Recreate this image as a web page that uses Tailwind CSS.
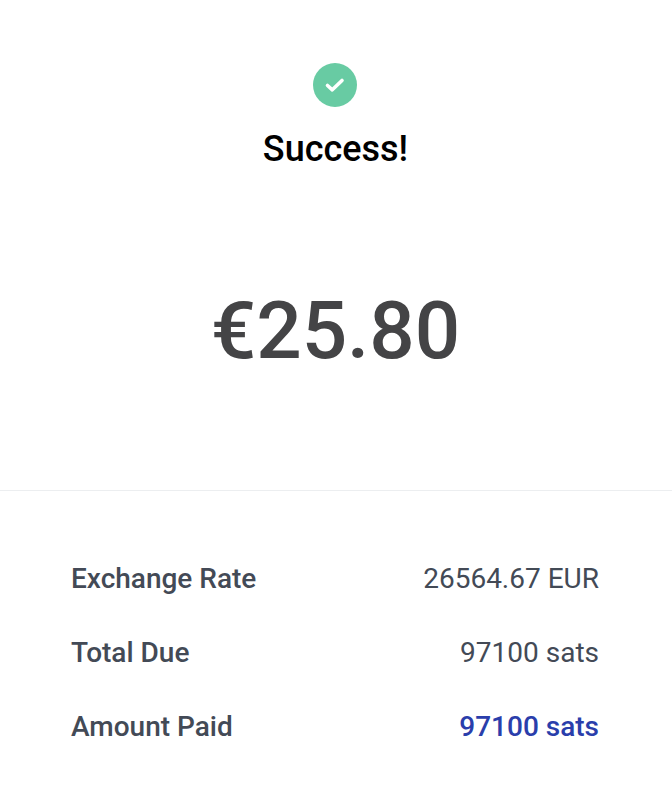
<!DOCTYPE html>
<html lang="en">
<head>
  <meta charset="UTF-8" />
  <title>Success</title>
  <script src="https://cdn.jsdelivr.net/npm/@tailwindcss/browser@4"></script>
</head>
<body class="bg-white font-['Roboto',sans-serif]">
  <div class="w-[672px] h-[806px] overflow-hidden">
    <!-- Status -->
    <div class="flex flex-col items-center pt-[63px] pr-px">
      <div class="w-11 h-11 mr-0.5 rounded-full bg-[#68cba3] flex items-center justify-center">
        <svg width="24" height="24" viewBox="0 0 24 24" fill="none" stroke="#fff" stroke-width="3.6" stroke-linecap="round" stroke-linejoin="round"><path d="M4.5 12.5l4.8 4.3 9.7-9.3"/></svg>
      </div>
      <h1 class="mt-[17px] text-[36px] leading-[50px] font-medium text-black">Success!</h1>
    </div>

    <!-- Amount -->
    <div class="h-[317px] flex items-center justify-center border-b border-[#eceef0] pr-px pb-[3px]">
      <span class="text-[80px] leading-none font-medium text-[#444446]">€25.80</span>
    </div>

    <!-- Details -->
    <div class="pl-[71px] pr-[73px] pt-[51px] text-[28px]">
      <div class="flex justify-between h-[74px] items-center">
        <span class="font-medium text-[#434a56]">Exchange Rate</span>
        <span class="text-[#434a56]">26564.67 EUR</span>
      </div>
      <div class="flex justify-between h-[74px] items-center">
        <span class="font-medium text-[#434a56]">Total Due</span>
        <span class="text-[#434a56]">97100 sats</span>
      </div>
      <div class="flex justify-between h-[74px] items-center">
        <span class="font-medium text-[#434a56]">Amount Paid</span>
        <span class="font-medium text-[#2a3eab]">97100 sats</span>
      </div>
    </div>
  </div>
</body>
</html>
